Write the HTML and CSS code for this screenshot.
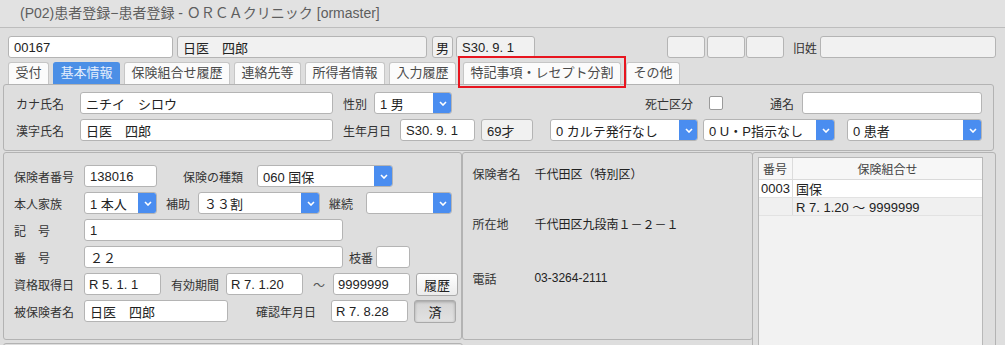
FILE: index.html
```html
<!DOCTYPE html>
<html lang="ja">
<head>
    <meta charset="UTF-8">
    <title>(P02)患者登録−患者登録</title>
    <link rel="stylesheet" href="styles.css">
</head>
<body>
    <div class="titlebar">(P02)患者登録−患者登録 - ＯＲＣＡクリニック [ormaster]</div>

    <div class="screen">
        <div class="headrow">
            <div class="box ptid">00167</div>
            <div class="box grey ptname">日医　四郎</div>
            <div class="box grey ptsex">男</div>
            <div class="box grey ptbirth">S30. 9. 1</div>
            <div class="box grey blank b1"></div>
            <div class="box grey blank b2"></div>
            <div class="box grey blank b3"></div>
            <span class="lbl oldname-lbl">旧姓</span>
            <div class="box grey oldname"></div>
        </div>

        <div class="tabs">
            <div class="tab">受付</div>
            <div class="tab active">基本情報</div>
            <div class="tab">保険組合せ履歴</div>
            <div class="tab">連絡先等</div>
            <div class="tab">所得者情報</div>
            <div class="tab">入力履歴</div>
            <div class="tab">特記事項・レセプト分割</div>
            <div class="tab">その他</div>
            <div class="mark"></div>
        </div>

        <div class="panel basic">
            <div class="row">
                <span class="lbl plabel">カナ氏名</span>
                <div class="box kana">ニチイ　シロウ</div>
                <span class="lbl sex-lbl">性別</span>
                <div class="select sex-sel"><span class="val">1 男</span><span class="arrow"><svg viewBox="0 0 8 5" width="8" height="5"><path d="M1 1l3 3 3-3" fill="none" stroke="#fff" stroke-width="1.6"/></svg></span></div>
                <span class="lbl death-lbl">死亡区分</span>
                <span class="check"></span>
                <span class="lbl alias-lbl">通名</span>
                <div class="box alias"></div>
            </div>
            <div class="row">
                <span class="lbl plabel">漢字氏名</span>
                <div class="box kana">日医　四郎</div>
                <span class="lbl sex-lbl birth-lbl">生年月日</span>
                <div class="box birth">S30. 9. 1</div>
                <div class="box grey age">69才</div>
                <div class="select karte-sel"><span class="val">0 カルテ発行なし</span><span class="arrow"><svg viewBox="0 0 8 5" width="8" height="5"><path d="M1 1l3 3 3-3" fill="none" stroke="#fff" stroke-width="1.6"/></svg></span></div>
                <div class="select up-sel"><span class="val">0 U・P指示なし</span><span class="arrow"><svg viewBox="0 0 8 5" width="8" height="5"><path d="M1 1l3 3 3-3" fill="none" stroke="#fff" stroke-width="1.6"/></svg></span></div>
                <div class="select kind-sel"><span class="val">0 患者</span><span class="arrow"><svg viewBox="0 0 8 5" width="8" height="5"><path d="M1 1l3 3 3-3" fill="none" stroke="#fff" stroke-width="1.6"/></svg></span></div>
            </div>
        </div>

        <div class="lower">
            <div class="lower-left">
                <div class="lower-row">
                    <div class="panel insurance">
                        <div class="row">
                            <span class="lbl ilabel">保険者番号</span>
                            <div class="box hokno">138016</div>
                            <span class="lbl kind-lbl">保険の種類</span>
                            <div class="select hokkind"><span class="val">060 国保</span><span class="arrow"><svg viewBox="0 0 8 5" width="8" height="5"><path d="M1 1l3 3 3-3" fill="none" stroke="#fff" stroke-width="1.6"/></svg></span></div>
                        </div>
                        <div class="row">
                            <span class="lbl ilabel">本人家族</span>
                            <div class="select honnin"><span class="val">1 本人</span><span class="arrow"><svg viewBox="0 0 8 5" width="8" height="5"><path d="M1 1l3 3 3-3" fill="none" stroke="#fff" stroke-width="1.6"/></svg></span></div>
                            <span class="lbl hojo-lbl">補助</span>
                            <div class="select hojo"><span class="val">３３割</span><span class="arrow"><svg viewBox="0 0 8 5" width="8" height="5"><path d="M1 1l3 3 3-3" fill="none" stroke="#fff" stroke-width="1.6"/></svg></span></div>
                            <span class="lbl hojo-lbl">継続</span>
                            <div class="select keizoku"><span class="val"></span><span class="arrow"><svg viewBox="0 0 8 5" width="8" height="5"><path d="M1 1l3 3 3-3" fill="none" stroke="#fff" stroke-width="1.6"/></svg></span></div>
                        </div>
                        <div class="row">
                            <span class="lbl ilabel">記　号</span>
                            <div class="box kigo">1</div>
                        </div>
                        <div class="row">
                            <span class="lbl ilabel">番　号</span>
                            <div class="box kigo">２２</div>
                            <span class="lbl eda-lbl">枝番</span>
                            <div class="box eda"></div>
                        </div>
                        <div class="row">
                            <span class="lbl ilabel">資格取得日</span>
                            <div class="box date">R 5. 1. 1</div>
                            <span class="lbl period-lbl">有効期間</span>
                            <div class="box date from">R 7. 1.20</div>
                            <span class="lbl tilde">～</span>
                            <div class="box date to">9999999</div>
                            <div class="btn">履歴</div>
                        </div>
                        <div class="row">
                            <span class="lbl ilabel">被保険者名</span>
                            <div class="box hihoken">日医　四郎</div>
                            <span class="lbl confirm-lbl">確認年月日</span>
                            <div class="box date">R 7. 8.28</div>
                            <div class="btn pressed">済</div>
                        </div>
                    </div>

                    <div class="panel hokensya">
                        <div class="irow"><span class="lbl mlabel">保険者名</span><span class="mval">千代田区（特別区）</span></div>
                        <div class="irow addr"><span class="lbl mlabel">所在地</span><span class="mval">千代田区九段南１－２－１</span></div>
                        <div class="irow tel"><span class="lbl mlabel">電話</span><span class="mval">03-3264-2111</span></div>
                    </div>
                </div>
                <div class="panel next"></div>
            </div>

            <div class="panel combi">
                <div class="combi-table">
                    <div class="trow thead"><span class="c1">番号</span><span class="c2 center">保険組合せ</span></div>
                    <div class="trow odd"><span class="c1">0003</span><span class="c2">国保</span></div>
                    <div class="trow even"><span class="c1"></span><span class="c2">R 7. 1.20 ～ 9999999</span></div>
                </div>
            </div>
        </div>
    </div>
</body>
</html>
```

FILE: styles.css
```css
* {
    box-sizing: border-box;
}
body {
    margin: 0;
    background-color: #dedede;
    font-family: "Liberation Sans", "Noto Sans CJK JP", sans-serif;
    font-size: 13px;
    color: #222;
    overflow: hidden;
}
.titlebar {
    height: 28px;
    line-height: 27px;
    padding-left: 20px;
    font-size: 14px;
    color: #5e5e5e;
    background-color: #e2e2e2;
    border-bottom: 1px solid #bdbdbd;
}
.screen {
    width: 1005px;
}
.headrow {
    display: flex;
    align-items: center;
    margin: 8px 0 0 8px;
    height: 22px;
}
.box {
    height: 22px;
    border: 1px solid #b4b4b4;
    border-radius: 3px;
    background-color: #fff;
    padding: 0 5px;
    display: flex;
    align-items: center;
    white-space: nowrap;
    flex: none;
}
.box.grey {
    background-color: #f1f1f1;
}
.lbl {
    font-size: 12px;
    color: #333;
    white-space: nowrap;
    flex: none;
}
.ptid { width: 165px; }
.ptname { width: 250px; margin-left: 4px; }
.ptsex { width: 21px; margin-left: 5px; padding: 0 3px; }
.ptbirth { width: 79px; margin-left: 3px; }
.blank { width: 38px; }
.b1 { margin-left: 132px; }
.b2 { margin-left: 2px; }
.b3 { margin-left: 1px; }
.oldname-lbl { margin-left: 9px; width: 27px; }
.oldname { width: 176px; }

/* tabs */
.tabs {
    position: relative;
    display: flex;
    gap: 4px;
    margin: 4px 0 0 8px;
    height: 22px;
}
.tab {
    height: 22px;
    line-height: 20px;
    padding: 0 6.5px;
    border: 1px solid #c6c6c6;
    border-bottom: none;
    border-radius: 3px 3px 0 0;
    background-color: #fbfbfb;
    color: #4a4a4a;
    white-space: nowrap;
}
.tab.active {
    background-color: #4b8fe6;
    border-color: #4b8fe6;
    color: #e4eefc;
}
.tabs .tab:nth-child(7) {
    margin-left: 3px;
}
.tabs .tab:nth-child(8) {
    margin-left: 1px;
}
.mark {
    position: absolute;
    left: 450px;
    top: -6px;
    width: 168px;
    height: 32px;
    border: 2px solid #e8151f;
}

/* panels */
.panel {
    border: 1px solid #b3b3b3;
    border-radius: 3px;
    background-color: #dedede;
}
.row {
    display: flex;
    align-items: center;
    height: 22px;
}
.basic {
    margin-left: 3px;
    width: 991px;
    height: 67px;
    padding: 7px 0 0 12px;
}
.basic .row + .row {
    margin-top: 5px;
}
.plabel { width: 64px; }
.kana { width: 253px; }
.sex-lbl { margin-left: 10px; width: 31px; }
.birth-lbl { width: 57px; }
.death-lbl { margin-left: 193px; width: 64px; }
.check {
    width: 14px;
    height: 14px;
    border: 1px solid #9a9a9a;
    border-radius: 2px;
    background-color: #fff;
    flex: none;
}
.alias-lbl { margin-left: 47px; width: 32px; }
.alias { width: 180px; }
.birth { width: 75px; }
.age { width: 52px; margin-left: 6px; }

.select {
    display: flex;
    height: 22px;
    border: 1px solid #b4b4b4;
    border-radius: 3px;
    background-color: #fff;
    flex: none;
    overflow: hidden;
}
.select .val {
    flex: 1;
    padding: 0 5px;
    display: flex;
    align-items: center;
    white-space: nowrap;
}
.select .arrow {
    width: 19px;
    margin: -1px -1px -1px 0;
    background-color: #4a8df0;
    border-radius: 0 3px 3px 0;
    display: flex;
    align-items: center;
    justify-content: center;
}
.sex-sel { width: 78px; }
.karte-sel { width: 148px; margin-left: 17px; }
.up-sel { width: 132px; margin-left: 5px; }
.kind-sel { width: 135px; margin-left: 12px; }

/* lower area */
.lower {
    display: flex;
    margin: 1px 0 0 3px;
}
.lower-left {
    width: 750px;
}
.lower-row {
    display: flex;
}
.insurance {
    width: 460px;
    height: 188px;
    padding: 12px 0 0 10px;
}
.insurance .row + .row {
    margin-top: 5px;
}
.ilabel { width: 70px; }
.hokno { width: 73px; }
.kind-lbl { margin-left: 26px; width: 74px; }
.hokkind { width: 136px; }
.honnin { width: 73px; }
.hojo-lbl { margin-left: 9px; width: 32px; }
.hojo { width: 122px; }
.keizoku { width: 86px; margin-left: 5px; }
.kigo { width: 259px; }
.eda-lbl { margin-left: 6px; width: 27px; }
.eda { width: 34px; }
.date { width: 77px; padding: 0 4px; }
.period-lbl { margin-left: 10px; width: 55px; }
.tilde { margin-left: 2px; width: 28px; text-align: center; color: #555; }
.btn {
    width: 42px;
    height: 23px;
    margin-left: 6px;
    border: 1px solid #a9a9a9;
    border-radius: 3px;
    background: linear-gradient(#ffffff, #ececec);
    display: flex;
    align-items: center;
    justify-content: center;
    flex: none;
}
.btn.pressed {
    background: linear-gradient(#d4d4d4, #e2e2e2);
    box-shadow: inset 0 1px 3px rgba(0, 0, 0, 0.25);
}
.hihoken { width: 144px; }
.confirm-lbl { margin-left: 28px; width: 75px; }

.hokensya {
    width: 291px;
    height: 188px;
    margin-left: 0;
    padding: 11px 0 0 9px;
}
.irow {
    display: flex;
    align-items: center;
    height: 18px;
}
.irow.addr { margin-top: 32px; }
.irow.tel { margin-top: 37px; }
.mlabel { width: 62px; }
.mval { font-size: 12px; color: #222; }

.next {
    margin-top: 3px;
    width: 460px;
    height: 20px;
}

.combi {
    width: 244px;
    height: 200px;
    margin-left: -1px;
    padding: 4px 0 0 5px;
}
.combi-table {
    width: 225px;
    height: 200px;
    border: 1px solid #b8b8b8;
    background-color: #f2f2f2;
}
.trow {
    display: flex;
    height: 18px;
    align-items: center;
    border-bottom: 1px solid #e2e2e2;
}
.trow.thead {
    height: 22px;
    background-color: #f7f7f7;
    border-bottom: 1px solid #dadada;
    font-size: 12px;
    color: #444;
}
.trow.odd { background-color: #fff; }
.trow.even { background-color: #f0f0f0; }
.c1 {
    width: 34px;
    height: 100%;
    display: flex;
    align-items: center;
    padding-left: 2px;
    border-right: 1px solid #dcdcdc;
}
.thead .c1 { padding-left: 4px; }
.c2 {
    flex: 1;
    padding-left: 3px;
}
.c2.center {
    text-align: center;
    padding-left: 0;
}
```
